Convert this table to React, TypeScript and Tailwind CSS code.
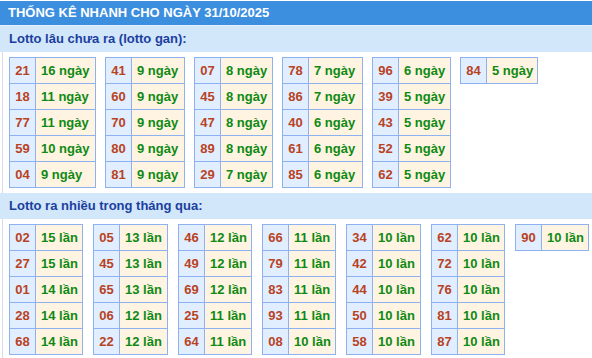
import React from "react";

type Row = [string, string];

const gan: Row[][] = [
  [["21", "16"], ["18", "11"], ["77", "11"], ["59", "10"], ["04", "9"]],
  [["41", "9"], ["60", "9"], ["70", "9"], ["80", "9"], ["81", "9"]],
  [["07", "8"], ["45", "8"], ["47", "8"], ["89", "8"], ["29", "7"]],
  [["78", "7"], ["86", "7"], ["40", "6"], ["61", "6"], ["85", "6"]],
  [["96", "6"], ["39", "5"], ["43", "5"], ["52", "5"], ["62", "5"]],
  [["84", "5"]],
];
const ganW = ["w-[60px]", "w-[53px]", "w-[52px]", "w-[54px]", "w-[52px]", "w-[51px]"];

const nhieu: Row[][] = [
  [["02", "15"], ["27", "15"], ["01", "14"], ["28", "14"], ["68", "14"]],
  [["05", "13"], ["45", "13"], ["65", "13"], ["06", "12"], ["22", "12"]],
  [["46", "12"], ["49", "12"], ["69", "12"], ["25", "11"], ["64", "11"]],
  [["66", "11"], ["79", "11"], ["83", "11"], ["93", "11"], ["08", "10"]],
  [["34", "10"], ["42", "10"], ["44", "10"], ["50", "10"], ["58", "10"]],
  [["62", "10"], ["72", "10"], ["76", "10"], ["81", "10"], ["87", "10"]],
  [["90", "10"]],
];
const nhieuW = ["w-[47px]", "w-[48px]", "w-[47px]", "w-[47px]", "w-[48px]", "w-[47px]", "w-[47px]"];

function StatTable({ rows, unit, valW }: { rows: Row[]; unit: string; valW: string }) {
  return (
    <div className="flex flex-col self-start shrink-0 border-t border-l border-[#8db2ef]">
      {rows.map(([n, v]) => (
        <div key={n} className="flex h-[26px]">
          <div className="w-[26px] border-r border-b border-[#8db2ef] bg-[#e1eeff] flex items-center justify-center text-[#b8431f] font-bold text-[13px]">
            {n}
          </div>
          <div
            className={`${valW} border-r border-b border-[#8db2ef] bg-[#fff3e2] flex items-center pl-[5px] text-[#0e8a12] font-bold text-[13px] whitespace-nowrap`}
          >
            {v} {unit}
          </div>
        </div>
      ))}
    </div>
  );
}

function SectionHeader({ children }: { children: React.ReactNode }) {
  return (
    <div className="h-[26px] bg-[#d3e7fb] flex items-center pl-[9px] text-[13px] font-bold text-[#1b3f9e]">
      {children}
    </div>
  );
}

export default function App() {
  return (
    <div
      className="w-[592px] h-[358px] overflow-hidden bg-white pt-px"
      style={{ fontFamily: '"Liberation Sans", Arial, sans-serif' }}
    >
      <div className="h-[24px] bg-[#3c8edf] flex items-center pl-[8px] text-white font-bold text-[13px]">
        THỐNG KÊ NHANH CHO NGÀY 31/10/2025
      </div>
      <div className="h-px bg-[#e6f0fb]" />
      <SectionHeader>Lotto lâu chưa ra (lotto gan):</SectionHeader>
      <div className="ml-[2px] border-l border-[#d2dde9] pl-[6px] pt-[5px] pb-[5px] flex flex-nowrap gap-x-[9px]">
        {gan.map((t, i) => (
          <StatTable key={i} rows={t} unit="ngày" valW={ganW[i]} />
        ))}
      </div>
      <SectionHeader>Lotto ra nhiều trong tháng qua:</SectionHeader>
      <div className="ml-[2px] border-l border-[#d2dde9] pl-[6px] pt-[5px] pb-[5px] flex flex-nowrap gap-x-[10px]">
        {nhieu.map((t, i) => (
          <StatTable key={i} rows={t} unit="lần" valW={nhieuW[i]} />
        ))}
      </div>
    </div>
  );
}
